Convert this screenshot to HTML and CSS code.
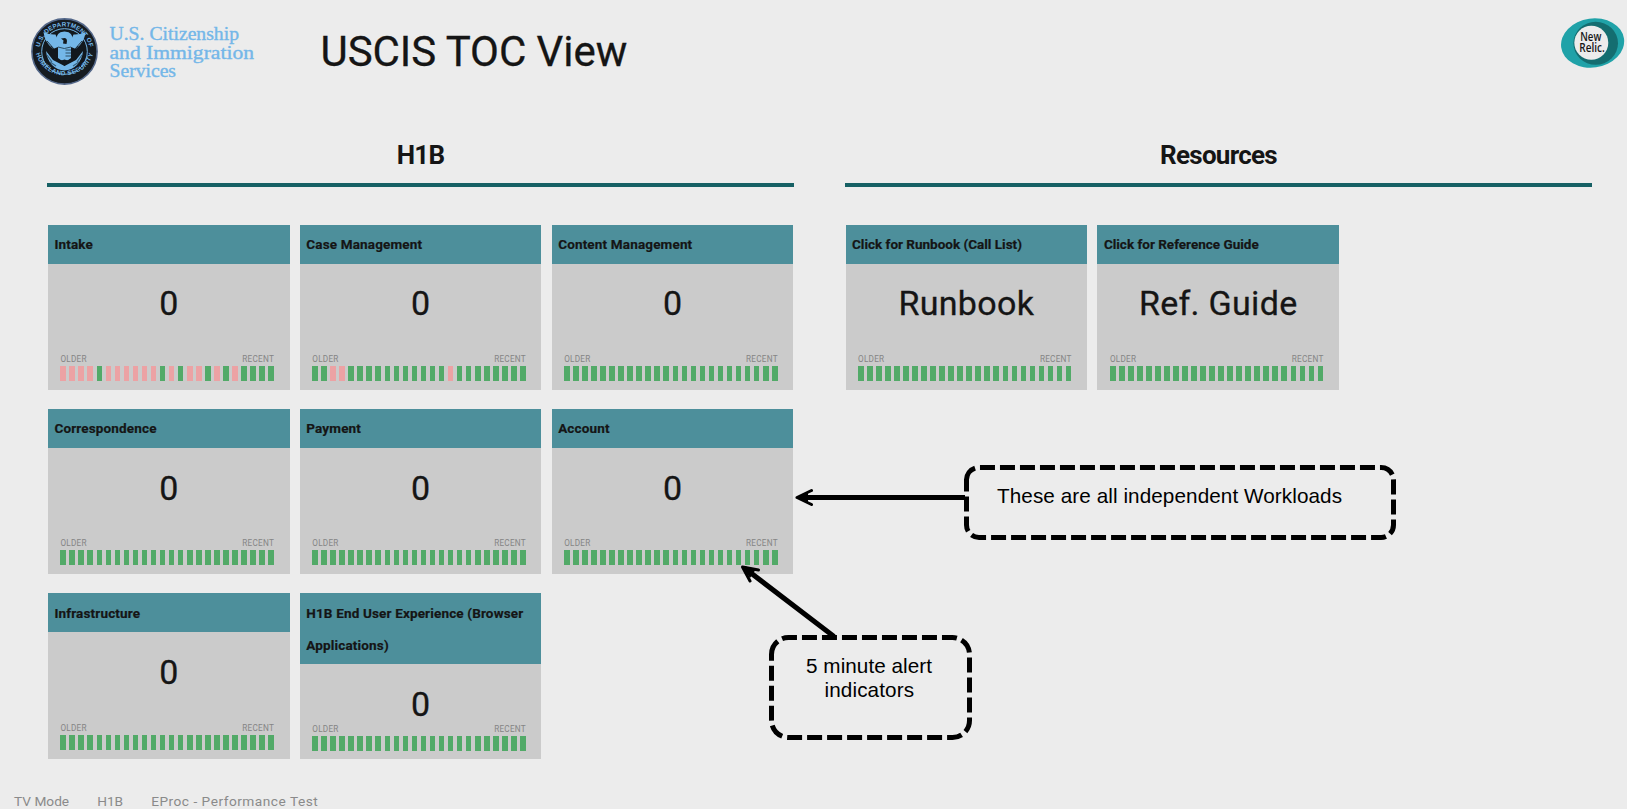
FILE: index.html
```html
<!DOCTYPE html>
<html lang="en">
<head>
<meta charset="utf-8">
<title>USCIS TOC View</title>
<link rel="stylesheet" href="styles.css">
</head>
<body>
<div class="page">
  <header class="top">
    <svg class="brand" width="240" height="72" viewBox="28 16 240 72">
      <defs>
        <path id="arcTop" d="M41.5 61 A24.9 24.9 0 1 1 87.5 61"/>
        <path id="arcBottom" d="M34.9 49 A29.8 29.8 0 0 0 94.1 49"/>
      </defs>
      <circle cx="64.5" cy="51.5" r="32.6" fill="#151b20" stroke="#536789" stroke-width="1.6"/>
      <text class="seal-text seal-top"><textPath href="#arcTop" startOffset="50%" text-anchor="middle">U.S. DEPARTMENT OF</textPath></text>
      <circle cx="64.5" cy="51.5" r="22.8" fill="#12181d" stroke="#74b7e8" stroke-width="1"/>
      <text class="seal-text seal-bottom"><textPath href="#arcBottom" startOffset="50%" text-anchor="middle">HOMELAND SECURITY</textPath></text>
      <path d="M46 51 C47 62 55 70.500 64.500 70.500 S82 62 83 51 L76 60 L64.500 66 L53 60Z" fill="#74b7e8"/>
      <path d="M43.500 32 Q50 35 55.500 34.500 L58 41 L60 38 L69 38 L71 41 L73.500 34.500 Q79 35 85.500 32 Q84.500 42 76 49 L71 47 L71 58 Q68 61 64.500 61 Q61 61 58 58 L58 47 L53 49 Q44.500 42 43.500 32Z" fill="#74b7e8"/>
      <path d="M56 42 Q55 32 64.500 31.500 Q74 32 73 42 L70 47 H59Z" fill="#74b7e8"/>
      <path d="M61 38.500 L65 38 Q67 38.500 67 41 L66.500 44 L63 43.500 L63.500 40.500Z" fill="#12181d"/>
      <path d="M47 41 L54 49 M82 41 L75 49 M51 46 L56 53 M78 46 L73 53" fill="none" stroke="#12181d" stroke-width=".8"/>
      <path d="M65.500 50 H71 M65.500 53 H71 M65.500 56 H71 M58 47 Q64 50 71 47" fill="none" stroke="#2c4d63" stroke-width="1"/>
      <path d="M60 61 L64.500 59.500 L69 61 L64.500 66Z" fill="#12181d"/>
      <path d="M47 55 l5 7 M50 62 l6 4 M82 55 l-5 7 M79 62 l-6 4" stroke="#39617d" stroke-width="1.200"/>
      <text class="brand-text" x="109.500" y="40" textLength="129.500" lengthAdjust="spacingAndGlyphs">U.S. Citizenship</text>
      <text class="brand-text" x="109.500" y="58.800" textLength="144.500" lengthAdjust="spacingAndGlyphs">and Immigration</text>
      <text class="brand-text" x="109.500" y="77.200" textLength="66.500" lengthAdjust="spacingAndGlyphs">Services</text>
    </svg>
    <h1>USCIS TOC View</h1>
    <svg class="relic" width="66" height="54" viewBox="1560 16 66 54">
      <ellipse cx="1592.600" cy="43" rx="31.700" ry="24.600" transform="rotate(-8 1592.600 43)" fill="#20a2a8"/>
      <ellipse cx="1595.700" cy="43.300" rx="22.300" ry="21.500" fill="#146d70"/>
      <circle cx="1591.300" cy="42.800" r="17" fill="#ececec"/>
      <text class="relic-text" x="1580.300" y="41.300" textLength="21" lengthAdjust="spacingAndGlyphs">New</text>
      <text class="relic-text" x="1579.300" y="51.800" textLength="25.500" lengthAdjust="spacingAndGlyphs">Relic.</text>
    </svg>
  </header>
  <main class="columns">
    <section class="group">
      <h2>H1B</h2>
      <div class="cards" id="h1b"></div>
    </section>
    <section class="group">
      <h2>Resources</h2>
      <div class="cards" id="resources"></div>
    </section>
  </main>
  <footer><span>TV Mode</span><span>H1B</span><span class="wide">EProc - Performance Test</span></footer>

  <svg class="notes" width="1627" height="809" viewBox="0 0 1627 809">
    <g fill="none" stroke="#000" stroke-width="5">
      <path stroke-dasharray="15 5" d="M966.500 479.500A12.500 12.500 0 0 1 979 467.500H1381A12.500 12.500 0 0 1 1393.500 479.500V525A12.500 12.500 0 0 1 1381 537.500H979A12.500 12.500 0 0 1 966.500 525Z"/>
      <path stroke-dasharray="15 5" d="M771.500 654.500A17 17 0 0 1 788.500 637.500H952.500A17 17 0 0 1 969.500 654.500V720.500A17 17 0 0 1 952.500 737.500H788.500A17 17 0 0 1 771.500 720.500Z"/>
      <path d="M965 497.500H800M834 636.500L745 568.500"/>
    </g>
    <g fill="none" stroke="#000" stroke-width="3" stroke-linecap="round" stroke-linejoin="round">
      <path d="M811.500 490.500L797 497.500L811.500 504.500M758.500 570L742.500 567L750 581"/>
    </g>
    <path d="M796 497.500l12-5.500v11zM742 566l14 3-6 9z"/>
    <text class="note-text" x="997" y="503" textLength="345">These are all independent Workloads</text>
    <text class="note-text" x="806" y="673" textLength="126">5 minute alert</text>
    <text class="note-text" x="824.500" y="697" textLength="89.500">indicators</text>
  </svg>
</div>
<script src="cards.js"></script>
</body>
</html>
```
FILE: styles.css
```css
* { box-sizing: border-box; }
body { margin: 0; background: #ececec; color: #151515; font-family: Roboto, "Liberation Sans", sans-serif; }
.page { position: relative; width: 1627px; height: 809px; overflow: hidden; display: flex; flex-direction: column; }
.top { flex: none; height: 116px; display: flex; align-items: flex-start; padding: 16px 1px 0 28px; }
.top h1 { margin: 8px 0 0 52.5px; font-size: 42px; font-weight: 400; line-height: 56px; letter-spacing: -.05px; -webkit-text-stroke: .3px #151515; }
.relic { margin-left: auto; }
.columns { flex: none; display: flex; gap: 51px; padding-left: 47px; height: 671px; }
.group { width: 747px; }
.group h2 { margin: 0; height: 71px; padding-top: 21px; border-bottom: 4px solid #166064; text-align: center; font-size: 26px; font-weight: 700; line-height: 36px; letter-spacing: -0.75px; }
.cards { display: grid; grid-template-columns: repeat(3, 241.7px); grid-auto-rows: 165.5px; gap: 18.9px 10.2px; padding: 37.6px 0 0 0.9px; }
#resources { padding-left: 0.5px; }
.card { display: flex; flex-direction: column; background: #cbcbcb; }
.card-title { background: #4d8f9b; padding: 3.400px 6.500px 3.600px; font-size: 13.500px; font-weight: 700; line-height: 32px; letter-spacing: 0.16px; -webkit-text-stroke: .2px #151515; }
#resources .card-title { letter-spacing: 0; }
#resources .card-value { letter-spacing: 0.3px; }
.card-value { flex: 1; padding-top: 19.600px; text-align: center; font-size: 34px; line-height: 40px; -webkit-text-stroke: .3px #151515; }
.history { padding: 0 15.5px 9px 12.5px; }
.history-labels { display: flex; justify-content: space-between; color: #858585; font-size: 8.200px; line-height: 10px; letter-spacing: .25px; margin-bottom: 2px; }
.bars { display: flex; justify-content: space-between; height: 15.200px; }
.bar { width: 5.700px; background: #52aa68; }
.bar.alert { background: #eca2a4; }
footer { flex: none; display: flex; gap: 28px; padding: 6px 0 0 14px; font-size: 13.700px; line-height: 16px; color: #8a8a8a; white-space: nowrap; }
footer .wide { letter-spacing: .5px; }
.notes { position: absolute; left: 0; top: 0; pointer-events: none; }
.note-text { font: 20.700px "Liberation Sans", Arial, sans-serif; fill: #000; }
.brand-text { font: 19.500px "Liberation Serif", serif; fill: #74b7e8; stroke: #74b7e8; stroke-width: .4px; }
.seal-text { font: 700 6.300px "Liberation Sans", sans-serif; fill: #74b7e8; }
.seal-top { letter-spacing: .1px; }
.seal-bottom { letter-spacing: .4px; }
.relic-text { font: 600 12px "Open Sans", sans-serif; fill: #151515; }
```
FILE: cards.js
```js
const groups = {
  h1b: [
    ["Intake", "0", [0, 1, 2, 3, 5, 6, 7, 8, 9, 10, 12, 14, 15, 17, 19]],
    ["Case Management", "0", [2, 3, 15]],
    ["Content Management", "0", []],
    ["Correspondence", "0", []],
    ["Payment", "0", []],
    ["Account", "0", []],
    ["Infrastructure", "0", []],
    ["H1B End User Experience (Browser Applications)", "0", []]
  ],
  resources: [
    ["Click for Runbook (Call List)", "Runbook", []],
    ["Click for Reference Guide", "Ref. Guide", []]
  ]
};

for (const [id, cards] of Object.entries(groups)) {
  document.getElementById(id).innerHTML = cards.map(([title, value, alerts]) => `
    <article class="card">
      <div class="card-title">${title}</div>
      <div class="card-value">${value}</div>
      <div class="history">
        <div class="history-labels"><span>OLDER</span><span>RECENT</span></div>
        <div class="bars">${Array.from({ length: 24 }, (_, i) =>
          `<i class="bar${alerts.includes(i) ? " alert" : ""}"></i>`).join("")}</div>
      </div>
    </article>`).join("");
}
```
